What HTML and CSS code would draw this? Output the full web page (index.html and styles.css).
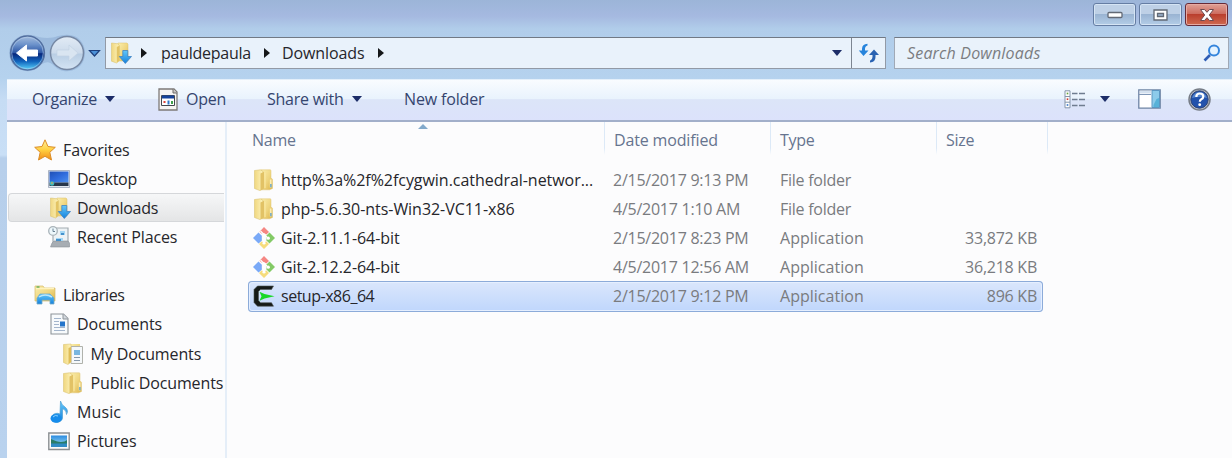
FILE: index.html
```html
<!DOCTYPE html>
<html lang="en">
<head>
<meta charset="utf-8">
<title>Downloads</title>
<link rel="stylesheet" href="styles.css">
</head>
<body>
<svg class="defs" width="0" height="0">
  <defs>
    <linearGradient id="gold" x1="0" x2="1" y1="0" y2="1"><stop offset="0" stop-color="#fbefad"/><stop offset=".55" stop-color="#efd57e"/><stop offset="1" stop-color="#dcb44a"/></linearGradient>
    <linearGradient id="goldside" x1="0" x2="1"><stop offset="0" stop-color="#f0d77f"/><stop offset="1" stop-color="#fdf3bd"/></linearGradient>
    <linearGradient id="blue" x1="0" x2="0" y1="0" y2="1"><stop offset="0" stop-color="#62c7fa"/><stop offset="1" stop-color="#1581dc"/></linearGradient>
    <linearGradient id="ball" x1="0" x2="0" y1="0" y2="1"><stop offset="0" stop-color="#a6bede"/><stop offset=".25" stop-color="#6c92cb"/><stop offset=".5" stop-color="#2b55a4"/><stop offset=".52" stop-color="#06267b"/><stop offset=".75" stop-color="#1265bd"/><stop offset="1" stop-color="#5dd8ff"/></linearGradient>
    <linearGradient id="ball2" x1="0" x2="0" y1="0" y2="1"><stop offset="0" stop-color="#e2ebf5"/><stop offset=".5" stop-color="#cbdaeb"/><stop offset=".53" stop-color="#b9cee4"/><stop offset="1" stop-color="#d4e4f4"/></linearGradient>
    <linearGradient id="star" x1="0" x2="0" y1="0" y2="1"><stop offset="0" stop-color="#fff0a0"/><stop offset=".5" stop-color="#ffd040"/><stop offset="1" stop-color="#f08a18"/></linearGradient>
    <linearGradient id="sky" x1="0" x2="0" y1="0" y2="1"><stop offset="0" stop-color="#2b8be0"/><stop offset="1" stop-color="#a8e4f4"/></linearGradient>
    <linearGradient id="desk" x1="0" x2="1" y1="0" y2="1"><stop offset="0" stop-color="#1f4fb4"/><stop offset=".5" stop-color="#2f6bdc"/><stop offset="1" stop-color="#4d90ee"/></linearGradient>
    <symbol id="folder" viewBox="0 0 22 22">
      <path d="M8 .8h9.500l.5 1v7l1.500 1.500v9.200l-3 1.300H8z" fill="url(#gold)" stroke="#dfc475" stroke-width=".5"/>
      <path d="M1.500 1.500 7.500.8 10 2.500v17L7 21.600 1.500 19.500z" fill="url(#goldside)" stroke="#dcc473" stroke-width=".6"/>
      <path d="M7.500 4.500 11 2.800V19.500l-3.500 2z" fill="#e2c265"/>
      <path d="M12 4v15" stroke="#fbe9a2" stroke-width="1"/>
      <path d="M16.800 10.500h1.700v8h-1.700z" fill="#fbedb6"/><path d="M17.300 15h1.200v3.200h-1.200z" fill="#4b97cf"/>
    </symbol>
    <symbol id="downfolder" viewBox="0 0 22 22">
      <path d="M8 1h9l1 1v17H8z" fill="url(#gold)" stroke="#dcc06a" stroke-width=".5"/>
      <path d="M1.500 1 8 1.800 9.500 4v14.500L6.500 21l-5-1.800z" fill="url(#goldside)" stroke="#dcc473" stroke-width=".6"/>
      <path d="M6.800 5 9.500 3.500v15L6.800 20.800z" fill="#e3c464"/>
      <path d="M12.800 8.500h5v6h3.700L15.300 21.500 9.300 14.500h3.500z" fill="url(#blue)" stroke="#3f83c4" stroke-width=".8"/>
    </symbol>
    <symbol id="git" viewBox="0 0 22 22">
      <path d="m11 0 5 5-2.700 2.600-2.300-1.700-2 .8-2.500-2z" fill="#f58783"/>
      <path d="m5.500 5.500 3.300 3.200v5L5.500 16.500 0 11z" fill="#79a9f7"/>
      <path d="m16.500 5.500 5.500 5.500-5.500 5.500-3-3v-5z" fill="#83ca66"/>
      <path d="m8.500 14.500 1.500.5-.5 2h3l-.5-2 1.500-.5 2.500 2.500-5 5-5-5z" fill="#f6dc7c"/>
      <path d="m7.500 4 3.500 3.500V15m0-7.500 4 3.500" fill="none" stroke="#fff" stroke-width="1.300"/><circle cx="11" cy="16" r="1.500" fill="#fff"/><circle cx="15.300" cy="11.200" r="1.600" fill="#fff"/>
    </symbol>
    <symbol id="cygwin" viewBox="0 0 22 22">
      <path d="M20.500 1 18.500 4.500H7.500L5.500 6.500v9l2 2.200h11l2 3.500H4.500L1 17.500v-13L4.500 1z" fill="#151a18" stroke="#4b5452" stroke-width=".6"/>
      <path d="m6.500 6.800 5 2.300 10 2.100-10 2.300-5 2.200 2-4.500z" fill="#18d827"/>
    </symbol>
    <symbol id="doc" viewBox="0 0 22 22">
      <path d="M3 1h12.500L20 5.500V21H3z" fill="#f7fafc" stroke="#8e949a" stroke-width="1.100"/><path d="M15 1v5h5" fill="#d3d9df" stroke="#8e949a"/>
      <path d="M6 5.500h7M6 8.500h5M6 11.500h5M6 14.500h11M6 17.500h11" stroke="#a3b5cc"/><path d="M12 8.500h5v5h-5z" fill="#2475cb"/>
    </symbol>
  </defs>
</svg>
<div class="window">
  <header class="titlebar">
    <button class="cap"><svg width="16" height="8"><rect x="1" y="1.500" width="14" height="5" rx="1" fill="#fff" stroke="#626975" stroke-width="1.300"/></svg></button>
    <button class="cap"><svg width="15" height="12"><path d="M1 1h13v10H1z" fill="#fff" stroke="#626975" stroke-width="1.300"/><path d="M4.500 4.500h6v3h-6z" fill="#9fb7d4" stroke="#626975" stroke-width="1.300"/></svg></button>
    <button class="cap close"><svg width="16" height="14" viewBox="0 0 16 14"><path d="M1.500 1.500h4L8 4.300l2.500-2.800h4L10.300 7l4.200 5.500h-4L8 9.700l-2.500 2.800h-4L5.700 7z" fill="#fff" stroke="#6b4a50"/></svg></button>
  </header>
  <nav class="navbar">
    <svg class="travel" width="98" height="38" viewBox="0 0 98 38">
      <path d="M28 .8C36 1 38 4 47 4s12-3.200 20-3.200c24 0 24 36.400 0 36.400-12 0-13-9-20-9s-8 9-19 9C3 37 3 1 28 .8" fill="#8eadd3" opacity=".6"/>
      <circle cx="27.500" cy="19" r="17" fill="url(#ball)" stroke="#536f9f" stroke-width="1.300"/>
      <circle cx="27.500" cy="19" r="15.800" fill="none" stroke="#b9d0ea" stroke-width=".8" opacity=".7"/>
      <path d="m16.500 19 10-8v5h11v6h-11v5z" fill="#fff" stroke="#f8fbff" stroke-linejoin="round"/>
      <circle cx="67" cy="19" r="16.500" fill="url(#ball2)" stroke="#7688a4" stroke-width="1.500"/>
      <path d="m78 19-9-8v5H57v6h12v5z" fill="#d9e5f1" stroke="#c3d3e4" stroke-width=".7"/>
      <path d="M89.500 16.500h10L94.500 22z" fill="#4c91d8" stroke="#1d3f7c" stroke-width="1.200"/>
    </svg>
    <div class="address">
      <svg class="ic addr-ic"><use href="#downfolder"/></svg>
      <i class="right r1"></i><span class="t crumb1">pauldepaula</span><i class="right r2"></i><span class="t crumb2">Downloads</span><i class="right r3"></i>
      <i class="down adown"></i>
      <div class="refresh"><svg width="22" height="20" viewBox="0 0 22 20"><path d="M9.500.8Q4 1 4 6v1.500H.8L5.500 13l5-5.500H7V6q0-3 2.500-3.500z" fill="#2684dc"/><path d="M12 19.500q5.500-.5 5.500-5.500v-2H21l-5-5.500-5 5.500h3.500v2q0 3-2.500 3.700z" fill="#2962b2"/></svg></div>
    </div>
    <div class="search"><span class="t find">Search Downloads</span>
      <svg width="18" height="18" viewBox="0 0 18 18"><path d="M7 11 1.500 16.500" stroke="#2e5db5" stroke-width="2.600"/><circle cx="11" cy="6.500" r="5" fill="#e5f3ff" stroke="#3585dc" stroke-width="2"/></svg>
    </div>
  </nav>
  <div class="toolbar">
    <span class="t organize">Organize</span><i class="down"></i>
    <svg class="app" width="21" height="23" viewBox="0 0 21 23"><path d="M1 1h15l3 3v18H1z" fill="#f6f4f2" stroke="#7d7a78" stroke-width="1.300"/><path d="M15 1v4h4" fill="#c8c5c3" stroke="#716e6c"/><path d="M3.500 7.500h13v10h-13z" fill="#fff" stroke="#44484e"/><path d="M4 7.500h12v3H4z" fill="#16439b"/><path d="M6.500 13v2" stroke="#dd4137" stroke-width="2"/><path d="M10.500 12.500v4" stroke="#2c77c9" stroke-width="2"/><path d="M14 13v3" stroke="#3fa14b" stroke-width="2"/></svg>
    <span class="t open">Open</span><span class="t share">Share with</span><i class="down"></i><span class="t newf">New folder</span>
    <div class="tools">
      <svg width="22" height="19" viewBox="0 0 22 19"><path d="M1 .8h5v17H1z" fill="#fff" stroke="#8595aa" stroke-width="1"/><path d="M1 6.500h5m-5 5.700h5" stroke="#8595aa"/><path d="M2.700 3.500h1.600" stroke="#65a13b" stroke-width="1.700"/><path d="M2.700 9.200h1.600" stroke="#d03a32" stroke-width="1.700"/><path d="M2.700 15h1.600" stroke="#3778c9" stroke-width="1.700"/><path d="M8 3.500h5.500m1.500 0h6M8 9.500h5.500m1.500 0h6M8 15.500h5.500m1.500 0h6" stroke="#6f7d90" stroke-width="1.300"/></svg>
      <i class="down viewdown"></i>
      <svg class="preview" width="23" height="20" viewBox="0 0 23 20"><path d="M.8.8h21.400v18.400H.8z" fill="#fff" stroke="#6d84a4" stroke-width="1.300"/><path d="M2 2h11v2.500H2z" fill="#d4e1ef"/><path d="M1 5.500h12" stroke="#7f97b6"/><path d="M14 1.500h7.500v17H14z" fill="#8ccbea" stroke="#5a97c2"/><path d="m15.500 16 3-6 2.500-1v9h-5.500z" fill="#57b2d8"/></svg>
      <svg width="23" height="23" viewBox="0 0 23 23"><circle cx="11.500" cy="11.500" r="10.500" fill="#c9ced6" stroke="#777d87" stroke-width="1.500"/><circle cx="11.500" cy="11.500" r="8.700" fill="#2252ac" stroke="#2d4271"/><path d="M4 10a7.800 7.800 0 0 1 15 0q-8-2-15 0" fill="#6c9ce0" opacity=".7"/><path d="M8.300 9q0-3.500 3.500-3.500t3.500 3q0 1.800-2 2.800-1.500.8-1.500 2.500" fill="none" stroke="#fff" stroke-width="2.200"/><circle cx="11.700" cy="16.700" r="1.400" fill="#fff"/></svg>
    </div>
  </div>
  <main class="body">
    <aside class="tree">
      <div class="node"><svg class="ic" viewBox="0 0 22 22"><path d="m11 .8 3 6.700 7.300.8-5.500 5 1.700 7.700L11 17.300 4.500 21l1.700-7.700-5.500-5L8 7.500z" fill="url(#star)" stroke="#dc8e27" stroke-width="1"/></svg><span class="t favorites">Favorites</span></div>
      <div class="node sub"><svg class="ic" viewBox="0 0 22 22"><path d="M.5 2.500h21v17H.5z" fill="#e1e7ef" stroke="#8f9bb0" stroke-width=".7"/><path d="M1.500 3.500h19v11h-19z" fill="url(#desk)"/><path d="M1.500 14.500h19v3.500h-19z" fill="#27364a"/><circle cx="4" cy="15.500" r="2.300" fill="#40b8bd"/><path d="M3 14.500h2v1H3z" fill="#f59b45"/></svg><span class="t desktop">Desktop</span></div>
      <div class="node sub chosen"><svg class="ic"><use href="#downfolder"/></svg><span class="t downloads">Downloads</span></div>
      <div class="node sub"><svg class="ic" viewBox="0 0 22 22"><path d="M8 2h12v15H5V10" fill="#edf2f5" stroke="#a3acb2" stroke-width="1.200"/><path d="m4 17 2-2h14l1.500 2v4H2.500z" fill="#a7adb3" stroke="#899198" stroke-width=".6"/><path d="M12 5h5v4h-5zM8 12h7v3H8z" fill="#a6d8f5"/><path d="M13 8h3M8 14h5" stroke="#2679bd" stroke-width="1.300"/><circle cx="5" cy="5" r="4.300" fill="#edf7fb" stroke="#a9b3b9" stroke-width="1.300"/><path d="M5 2.500V5.500h2" fill="none" stroke="#688093"/></svg><span class="t recent">Recent Places</span></div>
      <div class="node gap"></div>
      <div class="node"><svg class="ic" viewBox="0 0 22 22"><path d="M1 2h8l1.500 2H21v13H1z" fill="url(#gold)" stroke="#d6ba69" stroke-width=".7"/><path d="M2 4.500h18" stroke="#fff3bd" stroke-width="1.500"/><path d="M2.500 3h3" stroke="#55a955" stroke-width="1.300"/><path d="M3 20v-6l3-4h10l4 4v6h-4v-4H8v4z" fill="url(#blue)" stroke="#74a9c8" stroke-width=".8"/><path d="M5 13q6-4 13 0" fill="none" stroke="#bbe6fb" stroke-width="1.500"/></svg><span class="t libraries">Libraries</span></div>
      <div class="node sub"><svg class="ic"><use href="#doc"/></svg><span class="t documents">Documents</span></div>
      <div class="node deep"><svg class="ic" viewBox="0 0 22 22"><path d="M8 1h10v18H8z" fill="url(#gold)"/><path d="M9 3.500h11.500v17H9z" fill="#f5f8fa" stroke="#b0b2ac"/><path d="M12 7h6v5h-6z" fill="#79b6df"/><path d="M12 14.500h6m-6 3h6" stroke="#8799ac"/><path d="M1.500 1.500 9 1v18l-3 2.500-4.500-2z" fill="url(#goldside)" stroke="#dcc473" stroke-width=".6"/><path d="M6.500 5 9 4v15l-2.500 2z" fill="#dfbd58"/></svg><span class="t mydocs">My Documents</span></div>
      <div class="node deep"><svg class="ic"><use href="#folder"/></svg><span class="t public">Public Documents</span></div>
      <div class="node sub"><svg class="ic" viewBox="0 0 22 22"><path d="M12.500 0q1 4 4.500 6 4 3 1.500 7.500.5-4-4-6v9.500a5.500 4.500 0 1 1-2.500-4z" fill="url(#blue)" stroke="#4e9fd3" stroke-width=".7"/><ellipse cx="8" cy="17.500" rx="5.500" ry="4.200" fill="#168ceb"/><path d="M5 16q2-2.500 5-1" stroke="#8bd3ff" fill="none"/></svg><span class="t music">Music</span></div>
      <div class="node sub"><svg class="ic" viewBox="0 0 22 22"><path d="M.8 3h20.400v16.500H.8z" fill="#fafafa" stroke="#8b8f92" stroke-width="1.400"/><path d="M3 5.500h16v11.500H3z" fill="url(#sky)"/><path d="M3 9q6 3 10 3t6-2v4H3z" fill="#297c69"/><path d="M3 13.500h16V17H3z" fill="#2f8bc4"/></svg><span class="t pictures">Pictures</span></div>
    </aside>
    <section class="files">
      <div class="head"><span class="hc"><span class="t hname">Name</span></span><span class="hc"><span class="t hdate">Date modified</span></span><span class="hc"><span class="t htype">Type</span></span><span class="hc"><span class="t hsize">Size</span></span><i class="sort"></i></div>
      <div class="row"><div class="name"><svg class="ic"><use href="#folder"/></svg><span class="t n1">http%3a%2f%2fcygwin.cathedral-networ...</span></div><span class="t date">2/15/2017 9:13 PM</span><span class="t ff">File folder</span><span></span></div>
      <div class="row"><div class="name"><svg class="ic"><use href="#folder"/></svg><span class="t n2">php-5.6.30-nts-Win32-VC11-x86</span></div><span class="t date">4/5/2017 1:10 AM</span><span class="t ff">File folder</span><span></span></div>
      <div class="row"><div class="name"><svg class="ic"><use href="#git"/></svg><span class="t n3">Git-2.11.1-64-bit</span></div><span class="t date">2/15/2017 8:23 PM</span><span class="t app-t">Application</span><span class="t size">33,872 KB</span></div>
      <div class="row"><div class="name"><svg class="ic"><use href="#git"/></svg><span class="t n3">Git-2.12.2-64-bit</span></div><span class="t date">4/5/2017 12:56 AM</span><span class="t app-t">Application</span><span class="t size">36,218 KB</span></div>
      <div class="row selected"><div class="name"><svg class="ic"><use href="#cygwin"/></svg><span class="t n4">setup-x86_64</span></div><span class="t date">2/15/2017 9:12 PM</span><span class="t app-t">Application</span><span class="t size">896 KB</span></div>
    </section>
  </main>
</div>
</body>
</html>
```
FILE: styles.css
```css
* { box-sizing: border-box; }
body { margin: 0; overflow: hidden; font: 16px/24px "Open Sans", "Noto Sans", sans-serif; font-stretch: 92%; color: #26262b; }
.defs { display: block; height: 0; }
.window { width: 1232px; height: 458px; display: flex; flex-direction: column; background: linear-gradient(#9cb5d8 0, #a5b9e0 16px, #b1cdea 29px, #b5d2ee 78px, #c6dcf4 100px, #c9dff6 155px, #b7cfeb 158px, #b9d2ee 100%); }
.t { white-space: nowrap; flex: none; letter-spacing: -.25px; }
.ic { width: 22px; height: 22px; flex: none; }

/* title bar */
.titlebar { height: 33px; display: flex; justify-content: flex-end; gap: 3px; padding: 3px 4px 0 0; }
.cap { width: 43px; height: 23px; padding: 0; display: flex; align-items: center; justify-content: center; border: 1px solid #657da3; border-radius: 3px; box-shadow: inset 0 0 0 1px #d5e4f4; background: linear-gradient(#bed0e6 0 46%, #99b3d2 48%, #b4cde7); }
.close { border-color: #672a36; box-shadow: inset 0 0 0 1px #e7aaa2; background: linear-gradient(#dfa197 0, #cd6d60 46%, #b93d2c 48%, #cf6a50); }

/* navigation */
.navbar { height: 46px; display: flex; padding-top: 1px; }
.travel { width: 105px; flex: none; overflow: visible; padding-right: 7px; }
.address { width: 781px; height: 32px; margin-top: 3px; display: flex; align-items: center; border: 1px solid #929aa6; border-top-color: #717984; background: #e9f2fb; }
.addr-ic { margin-left: 4px; }
.right { border: 5px solid transparent; border-left: 6px solid #151719; border-right: 0; flex: none; }
.r1 { margin: 0 14px 0 9px; }
.r2 { margin: 0 12px 0 14px; }
.r3 { margin-left: 14px; }
.crumb1 { width: 89px; }
.crumb2 { width: 82px; letter-spacing: -.1px; }
.down { border: 5.500px solid transparent; border-top: 6px solid #1c2d68; border-bottom: 0; flex: none; margin-left: 8px; }
.adown { margin-left: auto; margin-right: 9px; border-left-width: 5px; border-right-width: 5px; }
.refresh { width: 34px; height: 30px; display: grid; place-items: center; border-left: 1px solid #7c8591; }
.search { width: 335px; height: 32px; margin: 3px 0 0 8px; border: 1px solid #a0a9b6; border-top-color: #717984; background: #e9f2fb; display: flex; align-items: center; padding: 0 7px 0 12px; justify-content: space-between; }
.find { font-style: italic; color: #7b7d81; letter-spacing: .18px; }

/* command bar */
.toolbar { height: 43px; margin-left: 7px; flex: none; display: flex; align-items: center; padding: 0 21px 2px 25px; color: #35456f; border-top: 1px solid #e3effa; border-bottom: 2px solid #a2afca; background: linear-gradient(#f9fcff 0, #e9f3fd 47%, #dce5f8 49%, #dce2fb); }
.organize { width: 65px; }
.app { margin: 0 7px 0 43px; }
.open { width: 40px; }
.share { width: 77px; margin-left: 41px; }
.newf { margin-left: 42px; letter-spacing: -.15px; }
.tools { display: flex; align-items: center; margin-left: auto; }
.viewdown { margin-left: 14px; }
.preview { margin: 0 27px 0 28px; }

/* folder tree */
.body { flex: 1; display: flex; margin-left: 7px; background: #fcfcfd; min-height: 0; }
.tree { width: 220px; border-right: 2px solid #e5eef8; padding-top: 13px; flex: none; overflow: hidden; }
.node { height: 29.150px; display: flex; align-items: center; padding-left: 27px; gap: 7px; margin-right: 1px; overflow: hidden; }
.sub { padding-left: 41px; }
.deep { padding-left: 55px; gap: 6.500px; }
.chosen { margin-left: 1px; padding-left: 40px; gap: 6px; border: 1px solid #d5d7da; border-right: 0; border-radius: 4px 0 0 4px; background: linear-gradient(#f6f7f8, #e4e5e6); }
.favorites, .recent, .mydocs, .public { letter-spacing: -.13px; }
.documents, .pictures { letter-spacing: -.05px; }
.music { letter-spacing: .1px; }
.libraries { letter-spacing: -.35px; }

/* file list */
.files { padding-left: 21px; width: 816px; }
.head { height: 43px; position: relative; display: grid; grid-template-columns: 357px 166px 166px 111px; color: #66748f; }
.hc { padding: 6px 0 0 9px; border-right: 1px solid transparent; border-image: linear-gradient(#dce9f7 60%, #fcfcfd 75%) 1; }
.hc:first-child { padding-left: 4px; }
.hdate { letter-spacing: -.15px; }
.sort { position: absolute; left: 170px; top: 2px; border: 5px solid transparent; border-bottom-color: #83aacb; border-top: 0; }
.row { width: 795px; height: 29px; display: grid; grid-template-columns: 365px 167px 160px 97px; align-items: center; color: #797b7f; }
.name { display: flex; align-items: center; padding-left: 5px; gap: 6px; color: #26262b; }
.n1, .n2 { letter-spacing: -.04px; }
.n3 { letter-spacing: -.06px; }
.n4 { letter-spacing: -.48px; }
.app-t { letter-spacing: .02px; }
.size { text-align: right; }
.selected { height: 31px; padding-bottom: 2px; box-shadow: inset 0 0 0 1px #8cabd9, inset 0 0 0 2px #e5efff; border-radius: 4px; background: linear-gradient(#dbe7fc, #bfd6fc); }
```
